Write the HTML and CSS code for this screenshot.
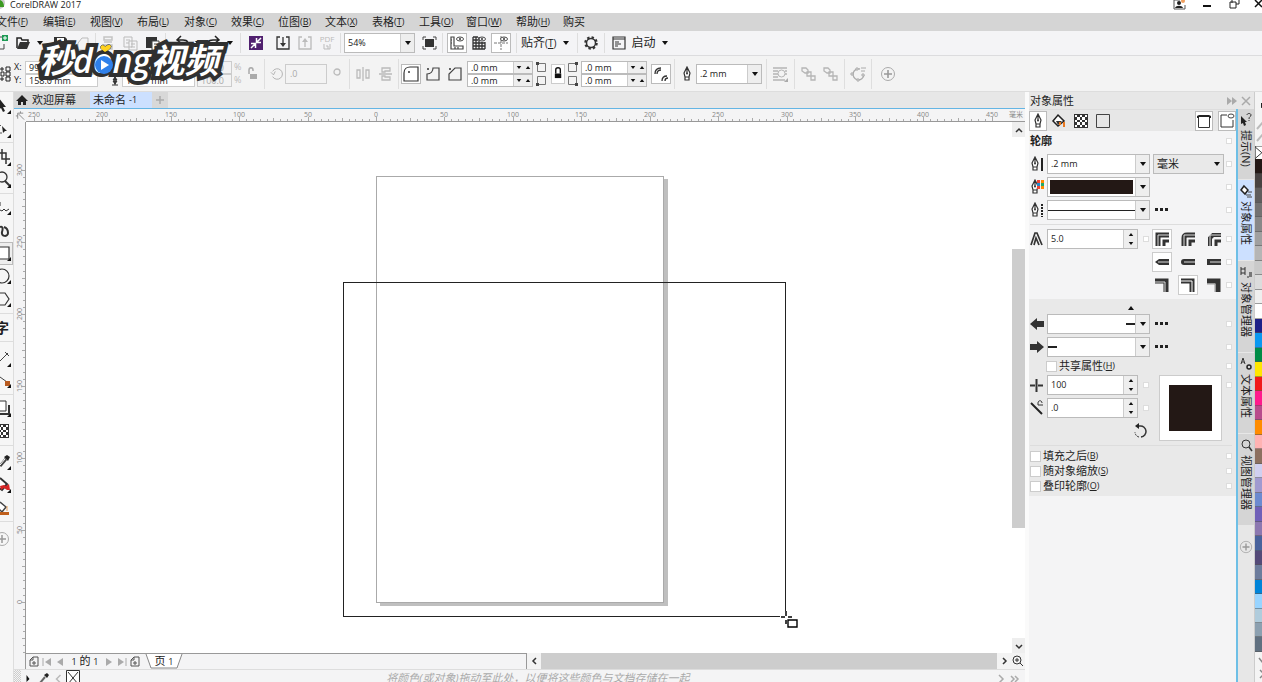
FILE: index.html
```html
<!DOCTYPE html>
<html lang="zh-CN">
<head>
<meta charset="utf-8">
<title>CorelDRAW 2017</title>
<link rel="stylesheet" href="styles.css">
</head>
<body>
<svg class="sprite" aria-hidden="true">
  <symbol id="caret" viewBox="0 0 8 6"><path d="M1 1h6L4 5z" fill="#111"/></symbol>
  <symbol id="up" viewBox="0 0 8 6"><path d="M1 5h6L4 1z" fill="#111"/></symbol>
  <symbol id="pen" viewBox="0 0 10 16"><path d="M5 1 2 7l1 4h4l1-4zM5 1v6M3 11h4v3H3z" fill="#fff" stroke="#333" stroke-width="1.2"/><circle cx="5" cy="7.500" r="1" fill="#333"/></symbol>
  <symbol id="dots" viewBox="0 0 16 6"><path d="M1 1h3v3H1zM6 1h3v3H6zM11 1h3v3h-3z" fill="#222"/></symbol>
  <symbol id="plus" viewBox="0 0 16 16"><circle cx="8" cy="8" r="6.500" fill="none" stroke="#aaa"/><path d="M8 4v8M4 8h8" stroke="#999" stroke-width="1.600"/></symbol>
  <symbol id="sheet" viewBox="0 0 10 12"><path d="M4 1h5v9H1V4zM4 1v3H1M5 5v4M3 7h4" fill="none" stroke="#555"/></symbol>
  <symbol id="chain" viewBox="0 0 16 16"><path d="M1 2h4l2 2v3H4L1 5zM6 6h4v4H6zM10 10h4v4h-4z" fill="#f3f3f3" stroke="#b5b5b5" stroke-width="1.300"/></symbol>
  <symbol id="checks" viewBox="0 0 14 14"><path d="M0 0h14v14H0z" fill="#333"/><path d="M1 1h2v2H1zM6 1h2v2H6zM11 1h2v2h-2zM3 3h3v3H3zM8 3h3v3H8zM1 6h2v2H1zM6 6h2v2H6zM11 6h2v2h-2zM3 8h3v3H3zM8 8h3v3H8zM1 11h2v2H1zM6 11h2v2H6zM11 11h2v2h-2z" fill="#fff"/></symbol>
</svg>

<header class="titlebar">
  <svg class="logo" viewBox="0 0 8 12"><circle cx="-1" cy="3" r="6" fill="#ccc"/><path d="M0 0c3 1 4 4 4 7H0z" fill="#3c9b22"/></svg>
  <span class="app-name">CorelDRAW 2017</span>
  <div class="window-buttons">
    <button aria-label="登录"><svg viewBox="0 0 14 12"><path d="M7 0H1v9h11V5" fill="none" stroke="#555"/><circle cx="6" cy="3" r="2" fill="#222"/><path d="M2 8c1-3 7-3 8 0z" fill="#222"/><circle cx="10" cy="1" r="2" fill="#f0a060"/></svg></button>
    <button aria-label="最小化"><svg viewBox="0 0 14 12"><path d="M3 6h8" stroke="#111" stroke-width="2"/></svg></button>
    <button aria-label="还原"><svg viewBox="0 0 14 12"><path d="M5 3V-1h7v5h-3M3 2h6v6H3z" fill="#fff" stroke="#222"/></svg></button>
    <button aria-label="关闭"><svg viewBox="0 0 14 12"><path d="m7 0 7 7m0-7L7 7" stroke="#111" stroke-width="1.500"/></svg></button>
  </div>
</header>

<nav class="menubar">
  <button>文件<small>(<u>F</u>)</small></button><button>编辑<small>(<u>E</u>)</small></button><button>视图<small>(<u>V</u>)</small></button><button>布局<small>(<u>L</u>)</small></button><button>对象<small>(<u>C</u>)</small></button><button>效果<small>(<u>C</u>)</small></button><button>位图<small>(<u>B</u>)</small></button><button>文本<small>(<u>X</u>)</small></button><button>表格<small>(<u>T</u>)</small></button><button>工具<small>(<u>O</u>)</small></button><button class="wide">窗口<small>(<u>W</u>)</small></button><button>帮助<small>(<u>H</u>)</small></button><button>购买</button>
</nav>

<div class="toolbar">
  <div class="group first">
    <button class="narrow" aria-label="新建"><svg viewBox="0 0 12 20"><path d="M0 16h4v-5M0 4h2" fill="none" stroke="#444"/><path d="M2 2h6v6H2z" fill="#1d9a55"/><path d="M5 3v4M3 5h4" stroke="#fff"/></svg></button>
    <button aria-label="打开"><svg viewBox="0 0 20 20"><path d="M3 15V5h4l1 2h6v2" fill="none" stroke="#222" stroke-width="1.500"/><path d="M3 16 6 9h10l-3 7z" fill="#333"/></svg></button>
    <button class="drop" aria-label="最近打开"><svg viewBox="0 0 8 6"><use href="#caret"/></svg></button>
    <button class="spaced" aria-label="保存"><svg viewBox="0 0 20 20"><path d="M4 4h11l2 2v10H4z" fill="#333"/><path d="M7 5h7v3H7z" fill="#fff"/></svg></button>
    <button aria-label="云"><svg viewBox="0 0 20 20"><path d="m6 10 4-5h6v12H6z" fill="none" stroke="#bbb"/></svg></button>
  </div>
  <div class="group edit">
    <button aria-label="剪切"><svg viewBox="0 0 20 20"><path d="M6 4h8v3H6zM6 9h8M6 12h8v4H6z" fill="none" stroke="#c3c3c3" stroke-width="1.500"/></svg></button>
    <button aria-label="复制"><svg viewBox="0 0 20 20"><path d="M4 4h8v10H4zM9 8h8v9H9zM6 7h4M6 10h3M11 11h4M11 14h4" fill="none" stroke="#bbb"/></svg></button>
    <button aria-label="粘贴"><svg viewBox="0 0 20 20"><path d="M4 4h11v11H4z" fill="#333"/><path d="M10 8h7v9h-7z" fill="#fff" stroke="#444"/><path d="M12 11h4M12 14h4" stroke="#444"/></svg></button>
  </div>
  <div class="group undo">
    <button aria-label="撤销"><svg viewBox="0 0 20 20"><path d="M6 7h5c5 0 6 3 4 7M9 3 5 7l4 3" fill="none" stroke="#222" stroke-width="1.500"/></svg></button>
    <button class="drop" aria-label="撤销列表"><svg viewBox="0 0 8 6"><use href="#caret"/></svg></button>
    <button aria-label="重做"><svg viewBox="0 0 20 20"><path d="M14 7H9c-5 0-6 3-4 7M11 3l4 4-4 3" fill="none" stroke="#222" stroke-width="1.500"/></svg></button>
    <button class="drop" aria-label="重做列表"><svg viewBox="0 0 8 6"><use href="#caret"/></svg></button>
  </div>
  <div class="group plain search">
    <button aria-label="搜索内容"><svg viewBox="0 0 20 20"><path d="M3 3h14v14H3z" fill="#50206f"/><path d="m5 15 4-4m2-2 4-4M5 10.500h4.500V15M10.500 5v4.500H15" fill="none" stroke="#fff" stroke-width="1.500"/></svg></button>
  </div>
  <div class="group files">
    <button aria-label="导入"><svg viewBox="0 0 20 20"><path d="M7 4H4v12h12V4h-3M10 4v8" fill="none" stroke="#333" stroke-width="1.300"/><path d="M7 10h6l-3 4z" fill="#333"/></svg></button>
    <button aria-label="导出"><svg viewBox="0 0 20 20"><path d="M7 4H4v12h12V4h-3M10 14V7" fill="none" stroke="#bbb" stroke-width="1.300"/><path d="M7 9h6l-3-4z" fill="#bbb"/></svg></button>
    <button class="pdf" aria-label="发布为 PDF"><span>PDF</span><svg viewBox="0 0 14 8"><path d="M4 1v5h6V1M6 3h2v3" fill="none" stroke="#bbb"/></svg></button>
  </div>
  <div class="group zoom-group">
    <div class="combo zoom-level"><input type="text" value="54%" aria-label="缩放级别"><button aria-label="选择缩放"><svg viewBox="0 0 8 6"><use href="#caret"/></svg></button></div>
    <button aria-label="全屏预览"><svg viewBox="0 0 20 20"><path d="M6 6h9v8H6z" fill="#333"/><path d="M4 7V4h3M14 4h3v3M4 13v3h3M14 16h3v-3" fill="none" stroke="#444"/></svg></button>
  </div>
  <div class="group view">
    <button class="on" aria-label="标尺"><svg viewBox="0 0 20 20"><path d="M4 4h3v9h9v3H4zM4 7h1M4 10h1M8 14v2M11 14v2" fill="none" stroke="#444" stroke-width="1.200"/><ellipse cx="13" cy="6" rx="3.500" ry="2" fill="none" stroke="#444"/><circle cx="13" cy="6" r="1" fill="#333"/></svg></button>
    <button aria-label="网格"><svg viewBox="0 0 20 20"><path d="M4 4v12h12M7 4v12M10 4v12M13 9v7M16 9v7M4 4h5M4 7h5M4 10h12M4 13h12" fill="none" stroke="#333" stroke-width="1.300"/><ellipse cx="13" cy="6" rx="3.500" ry="2" fill="none" stroke="#444"/><circle cx="13" cy="6" r="1" fill="#333"/></svg></button>
    <button class="on" aria-label="辅助线"><svg viewBox="0 0 20 20"><path d="M10 3v14M3 10h14" stroke="#777" stroke-dasharray="3 1"/><ellipse cx="13" cy="6" rx="3.500" ry="2" fill="#fff" stroke="#444"/><circle cx="13" cy="6" r="1" fill="#333"/></svg></button>
  </div>
  <div class="group snap">
    <button class="text">贴齐<small>(<u>T</u>)</small></button>
    <button class="drop spaced-drop" aria-label="贴齐选项"><svg viewBox="0 0 8 6"><use href="#caret"/></svg></button>
  </div>
  <div class="group">
    <button aria-label="选项"><svg viewBox="0 0 20 20"><circle cx="10" cy="10" r="5.500" fill="none" stroke="#333" stroke-width="2.500" stroke-dasharray="2.300 2"/><circle cx="10" cy="10" r="4.500" fill="none" stroke="#333" stroke-width="1.500"/></svg></button>
  </div>
  <div class="group plain launch">
    <button class="text"><svg viewBox="0 0 20 20"><path d="M4 4h12v12H4zM4 6h12" fill="none" stroke="#333" stroke-width="1.200"/><path d="M6 9h4M6 11h6M6 13h3" stroke="#333"/></svg>启动</button>
    <button class="drop spaced-drop" aria-label="启动列表"><svg viewBox="0 0 8 6"><use href="#caret"/></svg></button>
  </div>
</div>

<div class="propbar">
  <div class="group position">
    <svg class="origin" viewBox="0 0 10 20"><path d="M0 4h2v2H0zM5 3h4v4H5zM0 8h3v4H0zM5 8h4v4H5zM0 14h2v2H0zM5 13h4v4H5z" fill="none" stroke="#222"/></svg>
    <div class="pair labels"><label for="px">X:</label><label for="py">Y:</label></div>
    <div class="pair xy"><input type="text" id="px" value="99.0 mm"><input type="text" id="py" value="158.0 mm"></div>
    <svg class="size-icon" viewBox="0 0 10 24"><path d="M0 6h9M5 14v9M2 14h6M2 23h6M5 15l-2 3h4zM5 22l-2-3h4z" fill="#333" stroke="#333"/></svg>
    <div class="pair xy"><input type="text" aria-label="宽度" value="150.0 mm"><input type="text" aria-label="高度" value="124.0 mm"></div>
    <div class="pair scale"><input type="text" aria-label="水平缩放" value="100.0" disabled><input type="text" aria-label="垂直缩放" value="100.0" disabled></div>
    <div class="pair percent"><span>%</span><span>%</span></div>
    <button class="lock" aria-label="锁定比率"><svg viewBox="0 0 12 16"><path d="M2 8V4c0-3 4-3 4 0v1" fill="none" stroke="#aaa" stroke-width="1.500"/><path d="M3 8h7v5H3z" fill="#aaa"/></svg></button>
  </div>
  <div class="group rotate">
    <svg class="ico" viewBox="0 0 16 16"><path d="M3 11A6 6 0 1 0 3 5M1 6l3 3 2-4" fill="none" stroke="#aaa"/></svg>
    <input class="angle" type="text" aria-label="旋转角度" value=".0" disabled>
    <svg class="degree" viewBox="0 0 12 14"><circle cx="5" cy="5" r="3" fill="none" stroke="#bbb" stroke-width="1.300"/></svg>
  </div>
  <div class="group mirror">
    <button aria-label="水平镜像"><svg viewBox="0 0 20 20"><path d="M4 6h3v8H4zM16 6h-3v8h3zM10 3v14" fill="none" stroke="#bbb" stroke-width="1.300"/></svg></button>
    <button aria-label="垂直镜像"><svg viewBox="0 0 20 20"><path d="M7 4h8v3h-5v1H7zM7 16h8v-3h-5v-1H7zM4 10h13" fill="none" stroke="#bbb" stroke-width="1.300"/></svg></button>
  </div>
  <div class="group corners">
    <button class="on" aria-label="圆角"><svg viewBox="0 0 20 20"><path d="M3 17V9c0-4 3-6 6-6h8v14z" fill="none" stroke="#333" stroke-width="1.200"/><circle cx="8" cy="8" r="1" fill="#333"/></svg></button>
    <button aria-label="扇形角"><svg viewBox="0 0 20 20"><path d="M4 16V10c4 0 6-3 6-6h6v12z" fill="none" stroke="#444" stroke-width="1.200"/><circle cx="5" cy="5" r="1" fill="#333"/></svg></button>
    <button aria-label="倒棱角"><svg viewBox="0 0 20 20"><path d="M4 16V10l6-6h6v12z" fill="none" stroke="#444" stroke-width="1.200"/><circle cx="5" cy="5" r="1" fill="#333"/></svg></button>
    <div class="pair radius"><div class="spin"><input type="text" aria-label="左上角半径" value=".0 mm"><button aria-label="减小"><svg viewBox="0 0 8 6"><use href="#caret"/></svg></button><button aria-label="增大"><svg viewBox="0 0 8 6"><use href="#up"/></svg></button></div><div class="spin"><input type="text" aria-label="左下角半径" value=".0 mm"><button aria-label="减小"><svg viewBox="0 0 8 6"><use href="#caret"/></svg></button><button aria-label="增大"><svg viewBox="0 0 8 6"><use href="#up"/></svg></button></div></div>
    <svg class="corner-marks" viewBox="0 0 12 26"><path d="M2.500 2.500h8v8h-8zM2.500 15.500h8v8h-8z" fill="none" stroke="#777"/><path d="M1 1h3v3H1zM1 22h3v3H1z" fill="#444"/></svg>
    <button class="corner-lock" aria-label="同时编辑所有角"><svg viewBox="0 0 12 16"><path d="M3 8V4c0-3 5-3 5 0v4" fill="none" stroke="#111" stroke-width="1.500"/><path d="M2 8h7v5H2z" fill="#111"/></svg></button>
    <svg class="corner-marks" viewBox="0 0 12 26"><path d="M1.500 2.500h8v8h-8zM1.500 15.500h8v8h-8z" fill="none" stroke="#777"/><path d="M8 1h3v3H8zM8 22h3v3H8z" fill="#444"/></svg>
    <div class="pair radius"><div class="spin"><input type="text" aria-label="右上角半径" value=".0 mm"><button aria-label="减小"><svg viewBox="0 0 8 6"><use href="#caret"/></svg></button><button aria-label="增大"><svg viewBox="0 0 8 6"><use href="#up"/></svg></button></div><div class="spin"><input type="text" aria-label="右下角半径" value=".0 mm"><button aria-label="减小"><svg viewBox="0 0 8 6"><use href="#caret"/></svg></button><button aria-label="增大"><svg viewBox="0 0 8 6"><use href="#up"/></svg></button></div></div>
    <button class="on relative" aria-label="相对角缩放"><svg viewBox="0 0 20 20"><path d="M4 10c0-4 2-6 6-6M6 10c0-2 1-4 4-4M11 17c0-3 2-5 5-5M14 17c0-2 1-3 3-3" fill="none" stroke="#333" stroke-width="1.300"/></svg></button>
  </div>
  <div class="group outline">
    <svg class="ico" viewBox="0 0 10 16"><use href="#pen"/></svg>
    <div class="combo width"><input type="text" aria-label="轮廓宽度" value=".2 mm"><button aria-label="选择轮廓宽度"><svg viewBox="0 0 8 6"><use href="#caret"/></svg></button></div>
  </div>
  <div class="group wrap"><button aria-label="文本换行"><svg viewBox="0 0 20 20"><path d="M3 4h14M3 7h5M15 7h2M3 10h5M15 10h2M3 13h5M3 16h12" stroke="#b5b5b5" stroke-width="1.500"/><circle cx="11.500" cy="9.500" r="3.500" fill="none" stroke="#b5b5b5"/><path d="M18 14v4h-4z" fill="#aaa"/></svg></button></div>
  <div class="group order"><button aria-label="到图层前面"><svg viewBox="0 0 16 16"><use href="#chain"/></svg></button><button aria-label="到图层后面"><svg viewBox="0 0 16 16"><use href="#chain"/></svg></button></div>
  <div class="group"><button aria-label="转换为曲线"><svg viewBox="0 0 20 20"><path d="M12 5a5.500 5.500 0 1 0 4 6" fill="none" stroke="#aaa" stroke-width="1.300"/><path d="M13 4h5M13 7h4" stroke="#aaa"/><path d="M8 4h2v2H8zM3 9h2v2H3zM9 15h2v2H9zM14 10h2v2h-2z" fill="#f3f3f3" stroke="#aaa"/></svg></button></div>
  <div class="group plain add"><button aria-label="快速自定义"><svg viewBox="0 0 16 16"><use href="#plus"/></svg></button></div>
</div>

<main class="workspace">
  <aside class="toolbox">
    <div><button aria-label="选择"><svg viewBox="0 0 13 23"><path d="M-2 3 6 13H3l2 4-2 1-2-4-3 2z" fill="#222"/><path d="M11 16v4H7z" fill="#111"/></svg></button><button aria-label="形状"><svg viewBox="0 0 13 23"><path d="M2 9l5 5H5l-2 2z" fill="#222"/><path d="M-1 7l2 2M0 16h2" stroke="#555"/><path d="M11 17v4H7z" fill="#111"/></svg></button></div>
    <div><button aria-label="裁剪"><svg viewBox="0 0 13 23"><path d="M0 8h6v11M2 4v10h8" fill="none" stroke="#333" stroke-width="1.500"/><path d="M11 17v4H7z" fill="#111"/></svg></button><button aria-label="缩放"><svg viewBox="0 0 13 23"><circle cx="2" cy="9" r="5" fill="none" stroke="#333" stroke-width="1.300"/><path d="m5 13 5 5" stroke="#333" stroke-width="2"/><path d="M11 16v4H7z" fill="#111"/></svg></button></div>
    <div><button aria-label="手绘"><svg viewBox="0 0 13 23"><path d="M0 6v4M0 14l2 1 2-2 2 2 3-2" fill="none" stroke="#333"/><path d="M11 15v4H7z" fill="#111"/></svg></button><button aria-label="艺术笔"><svg viewBox="0 0 13 23"><path d="M0 8c3-1 3 2 2 5-1 5 6 5 6 1 0-3-1-5-4-6" fill="none" stroke="#333" stroke-width="2"/></svg></button><button class="on" aria-label="矩形"><svg viewBox="0 0 13 23"><path d="M0 5h9v12H0" fill="#fff" stroke="#333" stroke-width="1.200"/><path d="M11 15v4H7z" fill="#111"/></svg></button><button aria-label="椭圆形"><svg viewBox="0 0 13 23"><circle cx="2" cy="11" r="7" fill="none" stroke="#333" stroke-width="1.200"/><path d="M11 15v4H7z" fill="#111"/></svg></button><button aria-label="多边形"><svg viewBox="0 0 13 23"><path d="M0 5h5l4 6-4 6H0" fill="none" stroke="#333" stroke-width="1.200"/><path d="M11 15v4H7z" fill="#111"/></svg></button></div>
    <div><button class="type" aria-label="文本">字</button></div>
    <div class="low"><button aria-label="平行度量"><svg viewBox="0 0 13 23"><path d="m-1 16 9-9M5 6l4 4" stroke="#444"/><path d="M11 17v4H7z" fill="#111"/></svg></button><button aria-label="连接器"><svg viewBox="0 0 13 23"><path d="m0 8 7 5" stroke="#444"/><path d="M5 12h5v5H5z" fill="#b85b20"/><path d="M11 15v4H7z" fill="#111"/></svg></button></div>
    <div><button aria-label="阴影"><svg viewBox="0 0 13 23"><path d="M0 17h9V8" fill="none" stroke="#333" stroke-width="2"/><path d="M0 4h6v10H0" fill="#fff" stroke="#333"/><path d="M11 16v4H7z" fill="#111"/></svg></button><button aria-label="透明度"><svg viewBox="0 0 13 23"><use href="#checks" x="-5" y="4" width="14" height="14"/></svg></button></div>
    <div class="fills"><button aria-label="颜色滴管"><svg viewBox="0 0 13 23"><path d="m0 16 6-7" stroke="#444" stroke-width="3"/><path d="m0 15 5-6" stroke="#fff"/><path d="m4 7 4 4 2-4-3-2z" fill="#222"/><path d="M11 16v4H7z" fill="#111"/></svg></button><button aria-label="交互式填充"><svg viewBox="0 0 13 23"><path d="m0 5 7 6-5 6-3-2" fill="#fff" stroke="#333" stroke-width="2"/><path d="m0 13 4-1 2 1 3-2 1 6H7l-3-2-3 2z" fill="#d62525"/><path d="M11 16v4H7z" fill="#111"/></svg></button><button aria-label="智能填充"><svg viewBox="0 0 13 23"><path d="m0 6 6 5-4 5-3-3" fill="#fff" stroke="#444" stroke-width="1.500"/><path d="M0 16h9v3H0z" fill="#c0601c"/><path d="M7 10v5" stroke="#e6a15c"/></svg></button></div>
    <div class="end"><button class="more" aria-label="更多工具"><svg viewBox="0 0 13 23"><circle cx="2" cy="11" r="6.500" fill="none" stroke="#aaa"/><path d="M2 7v8M-2 11h8" stroke="#999" stroke-width="1.500"/></svg></button></div>
  </aside>

  <section class="document">
    <div class="doc-tabs">
      <button class="welcome"><svg viewBox="0 0 12 12"><path d="M6 1 0 7h2v4h3V8h2v3h3V7h2z" fill="#222"/></svg>欢迎屏幕</button>
      <button class="current">未命名<small>-1</small></button>
      <button class="new-tab" aria-label="新文档"><svg viewBox="0 0 12 12"><path d="M6 2v8M2 6h8" stroke="#aaa" stroke-width="1.500"/></svg></button>
    </div>
    <div class="ruler-row">
      <svg class="ruler-corner" viewBox="0 0 13 12"><path d="M4 10V4h6M5 5l6 6M7 2v2M2 7h2" fill="none" stroke="#888"/></svg>
      <svg class="ruler-h" id="rulerH" aria-hidden="true"></svg>
    </div>
    <div class="canvas-row">
      <svg class="ruler-v" id="rulerV" aria-hidden="true"></svg>
      <div class="canvas">
        <div class="page"></div>
        <div class="marquee"></div>
        <svg class="cursor" viewBox="0 0 20 20"><path d="M0 6h15M6 0v14" stroke="#fff" stroke-width="2"/><path d="M6 0v5M6 9v4M1 6h4M8 6h4" stroke="#000" stroke-width="1.500"/><path d="M8 9h9v7H8z" fill="#fff" stroke="#000" stroke-width="1.400"/></svg>
      </div>
      <div class="scroll-v">
        <button aria-label="向上滚动"><svg viewBox="0 0 12 12"><path d="m3 8 3-3 3 3" fill="none" stroke="#333" stroke-width="1.500"/></svg></button>
        <div class="track"><div class="thumb"></div></div>
        <button aria-label="向下滚动"><svg viewBox="0 0 12 12"><path d="m3 5 3 3 3-3" fill="none" stroke="#333" stroke-width="1.500"/></svg></button>
      </div>
    </div>
    <div class="page-row">
      <div class="page-nav">
        <button aria-label="在前面添加页"><svg viewBox="0 0 10 12"><use href="#sheet"/></svg></button>
        <button aria-label="第一页"><svg viewBox="0 0 10 12"><path d="M1 2v8" stroke="#aaa"/><path d="M9 2v8L3 6z" fill="#aaa"/></svg></button>
        <button aria-label="上一页"><svg viewBox="0 0 10 12"><path d="M8 2v8L2 6z" fill="#aaa"/></svg></button>
        <span class="count"><small>1</small>&nbsp;的&nbsp;<small>1</small></span>
        <button aria-label="下一页"><svg viewBox="0 0 10 12"><path d="M2 2v8l6-4z" fill="#aaa"/></svg></button>
        <button aria-label="最后一页"><svg viewBox="0 0 10 12"><path d="M9 2v8" stroke="#aaa"/><path d="M1 2v8l6-4z" fill="#aaa"/></svg></button>
        <button aria-label="在后面添加页"><svg viewBox="0 0 10 12"><use href="#sheet"/></svg></button>
        <button class="page-tab"><svg viewBox="0 0 38 15"><path d="M1 0h36l-5 14H6z" fill="#fff"/><path d="M1 0 6 14h26l5-14" fill="none" stroke="#888"/></svg><span>页 <small>1</small></span></button>
      </div>
      <div class="scroll-h">
        <button aria-label="向左滚动"><svg viewBox="0 0 12 12"><path d="M8 3 5 6l3 3" fill="none" stroke="#333" stroke-width="1.500"/></svg></button>
        <div class="thumb"></div>
        <button aria-label="向右滚动"><svg viewBox="0 0 12 12"><path d="m5 3 3 3-3 3" fill="none" stroke="#333" stroke-width="1.500"/></svg></button>
        <button aria-label="导航器"><svg viewBox="0 0 12 12"><circle cx="5" cy="5" r="4" fill="none" stroke="#333"/><path d="m8 8 3 3M5 3v4M3 5h4" stroke="#333"/></svg></button>
      </div>
    </div>
    <div class="doc-palette">
      <span class="grip"></span>
      <svg class="ico" viewBox="0 0 10 14"><path d="M4 5v7l3-3z" fill="#111"/></svg>
      <svg class="ico eyedrop" viewBox="0 0 14 14"><path d="m4 13 5-6" stroke="#666" stroke-width="2"/><path d="m8 5 3 3 2-3-2-2z" fill="#222"/></svg>
      <svg class="ico" viewBox="0 0 10 14"><path d="M7 5 3 9l4 4" fill="none" stroke="#bbb" stroke-width="1.500"/></svg>
      <svg class="ico none" viewBox="0 0 14 14"><path d="M0.500 0.500h13V14H0.500z" fill="#fff" stroke="#333"/><path d="m2 2 10 12M12 2 2 14" stroke="#333"/></svg>
      <p>将颜色(或对象)拖动至此处，以便将这些颜色与文档存储在一起</p>
      <svg class="ico next" viewBox="0 0 24 14"><path d="m1 5 4 4-4 4M13 6l3 3-3 3M17 6l3 3-3 3" fill="none" stroke="#aaa" stroke-width="1.500"/></svg>
    </div>
  </section>

  <section class="side">
    <header class="docker-title"><h2>对象属性</h2>
      <button aria-label="折叠"><svg viewBox="0 0 12 12"><path d="M1 2v8l5-4zM6 2v8l5-4z" fill="#aaa"/></svg></button>
      <button aria-label="关闭泊坞窗"><svg viewBox="0 0 12 12"><path d="m2 2 8 8m0-8-8 8" stroke="#aaa" stroke-width="1.500"/></svg></button>
    </header>
    <div class="side-body">
      <div class="docker">
        <div class="kinds">
          <button class="on" aria-label="轮廓"><svg viewBox="0 0 10 16"><use href="#pen"/></svg></button>
          <button aria-label="填充"><svg viewBox="0 0 16 16"><path d="m7 2 6 6-6 5-5-5z" fill="#fff" stroke="#222" stroke-width="1.500"/><path d="M5 8h6l-4 4z" fill="#333"/><path d="M13 9v5M9 9v3" stroke="#e87820" stroke-width="2"/></svg></button>
          <button aria-label="透明度"><svg viewBox="-1 -1 16 16"><use href="#checks" width="14" height="14"/></svg></button>
          <button aria-label="矩形"><svg viewBox="0 0 16 16"><path d="M1.500 1.500h13v13h-13z" fill="none" stroke="#444"/></svg></button>
          <button class="on frame-button" aria-label="滚动模式"><svg viewBox="0 0 16 16"><path d="M2.500 5v9.500h11V5" fill="none" stroke="#333"/><path d="M1 5V3l2-1h10l2 1v2h-2V4H3v1z" fill="#222"/></svg></button>
          <button class="on" aria-label="显示选项"><svg viewBox="0 0 16 16"><path d="M8 2H2v12h12V7" fill="none" stroke="#333"/><ellipse cx="12" cy="3" rx="3" ry="2" fill="none" stroke="#444"/></svg></button>
        </div>

        <div class="panel">
          <div class="row"><h3>轮廓</h3><i class="flag"></i></div>
          <div class="row"><svg class="lead" viewBox="0 0 17 18"><use href="#pen" x="0" y="1" width="10" height="16"/><path d="M12 3v13" stroke="#222" stroke-width="2"/></svg>
            <div class="combo field"><input type="text" aria-label="宽度" value=".2 mm"><button aria-label="选择宽度"><svg viewBox="0 0 8 6"><use href="#caret"/></svg></button></div>
            <div class="select"><select aria-label="单位"><option>毫米</option></select><svg viewBox="0 0 8 6"><use href="#caret"/></svg></div><i class="flag"></i></div>
          <div class="row"><svg class="lead" viewBox="0 0 17 18"><use href="#pen" x="0" y="1" width="10" height="16"/><path d="M7 2h3v3H7zM7 8h3v3H7z" fill="#e43"/><path d="M11 2h3v3h-3zM11 8h3v3h-3z" fill="#f80"/><path d="M7 5h3v3H7z" fill="#28c"/><path d="M11 5h3v3h-3z" fill="#2a6"/></svg>
            <div class="combo field"><button class="sample" aria-label="轮廓颜色"><span class="ink"></span></button><button aria-label="选择颜色"><svg viewBox="0 0 8 6"><use href="#caret"/></svg></button></div><i class="flag"></i></div>
          <div class="row"><svg class="lead" viewBox="0 0 17 18"><use href="#pen" x="0" y="1" width="10" height="16"/><path d="M12 3v13" stroke="#222" stroke-width="2" stroke-dasharray="2 1"/></svg>
            <div class="combo field"><button class="sample" aria-label="线条样式"><span class="stroke"></span></button><button aria-label="选择样式"><svg viewBox="0 0 8 6"><use href="#caret"/></svg></button></div>
            <button class="more" aria-label="设置"><svg viewBox="0 0 16 6"><use href="#dots"/></svg></button><i class="flag"></i></div>
          <hr>
          <div class="row"><svg class="lead" viewBox="0 0 17 18"><path d="M1 15 5 3h2l5 12M4 15 6 8l3 7" fill="none" stroke="#333" stroke-width="1.700"/></svg>
            <div class="stepper"><input type="text" aria-label="斜接限制" value="5.0"><div><button aria-label="增大"><svg viewBox="0 0 8 6"><use href="#up"/></svg></button><button aria-label="减小"><svg viewBox="0 0 8 6"><use href="#caret"/></svg></button></div></div><i class="flag near"></i>
            <div class="trio"><button class="on" aria-label="斜接角"><svg viewBox="0 0 18 18"><path d="M5 16V5h11" fill="none" stroke="#333" stroke-width="5"/><path d="M5 16V5h11" fill="none" stroke="#ddd"/><path d="M11 16v-5h5" fill="none" stroke="#333" stroke-width="3"/></svg></button><button aria-label="圆角"><svg viewBox="0 0 18 18"><path d="M5 16V8q0-3 3-3h8" fill="none" stroke="#333" stroke-width="5"/><path d="M5 16V5h11" fill="none" stroke="#ddd"/><path d="M11 16v-5h5" fill="none" stroke="#333" stroke-width="3"/></svg></button><button aria-label="斜切角"><svg viewBox="0 0 18 18"><path d="M5 16V8l3-3h8" fill="none" stroke="#333" stroke-width="4"/><path d="M5 16V5h11" fill="none" stroke="#ddd"/><path d="M11 16v-5h5" fill="none" stroke="#333" stroke-width="3"/></svg></button></div><i class="flag"></i></div>
          <div class="row"><div class="trio pushed"><button class="on" aria-label="方形端头"><svg viewBox="0 0 18 18"><path d="m2 9 4-3h10v6H6z" fill="#333"/><path d="M5 9h11" stroke="#ddd"/></svg></button><button aria-label="圆形端头"><svg viewBox="0 0 18 18"><path d="M5 6h11v6H5Q2 12 2 9t3-3" fill="#333"/><path d="M5 9h11" stroke="#ddd"/></svg></button><button aria-label="延伸端头"><svg viewBox="0 0 18 18"><path d="M2 6h14v6H2z" fill="#333"/><path d="M5 9h11" stroke="#ddd"/></svg></button></div><i class="flag"></i></div>
          <div class="row"><div class="trio pushed"><button aria-label="外部轮廓"><svg viewBox="0 0 18 18"><path d="M2 5h11v11" fill="none" stroke="#333" stroke-width="5"/><path d="M2 6h10v10" fill="none" stroke="#ddd"/></svg></button><button class="on" aria-label="居中轮廓"><svg viewBox="0 0 18 18"><path d="M2 5h11v11" fill="none" stroke="#333" stroke-width="5"/><path d="M2 5h11v11" fill="none" stroke="#fff"/></svg></button><button aria-label="内部轮廓"><svg viewBox="0 0 18 18"><path d="M2 5h11v11" fill="none" stroke="#333" stroke-width="5"/><path d="M2 8h8v8" fill="none" stroke="#999"/></svg></button></div><i class="flag"></i></div>
        </div>

        <div class="panel shaded">
          <button class="fold" aria-label="收起"><svg viewBox="0 0 8 6"><use href="#up"/></svg></button>
          <div class="row"><svg class="lead" viewBox="0 0 17 18"><path d="m0 9 7-6v3h7v6H7v3z" fill="#333"/></svg>
            <div class="combo field"><button class="sample" aria-label="起始箭头"><span class="dash right"></span></button><button aria-label="选择起始箭头"><svg viewBox="0 0 8 6"><use href="#caret"/></svg></button></div>
            <button class="more" aria-label="起始箭头选项"><svg viewBox="0 0 16 6"><use href="#dots"/></svg></button><i class="flag"></i></div>
          <div class="row"><svg class="lead" viewBox="0 0 17 18"><path d="M14 9 7 3v3H0v6h7v3z" fill="#333"/></svg>
            <div class="combo field"><button class="sample" aria-label="终止箭头"><span class="dash"></span></button><button aria-label="选择终止箭头"><svg viewBox="0 0 8 6"><use href="#caret"/></svg></button></div>
            <button class="more" aria-label="终止箭头选项"><svg viewBox="0 0 16 6"><use href="#dots"/></svg></button><i class="flag"></i></div>
          <div class="row check indent"><label><input type="checkbox">共享属性<small>(<u>H</u>)</small></label><i class="flag"></i></div>
          <div class="nib">
            <div class="nib-fields">
              <div class="row"><svg class="lead" viewBox="0 0 17 18"><path d="M6.500 3v13M0 9.500h5M8 9.500h5" stroke="#333" stroke-width="2"/></svg><div class="stepper"><input type="text" aria-label="伸展" value="100"><div><button aria-label="增大"><svg viewBox="0 0 8 6"><use href="#up"/></svg></button><button aria-label="减小"><svg viewBox="0 0 8 6"><use href="#caret"/></svg></button></div></div><i class="flag near"></i></div>
              <div class="row"><svg class="lead" viewBox="0 0 17 18"><path d="m1 4 11 11" stroke="#222" stroke-width="2"/><path d="M8 6V4c0-3 4-3 4 0M8 6h5" fill="none" stroke="#333"/></svg><div class="stepper"><input type="text" aria-label="笔尖角度" value=".0"><div><button aria-label="增大"><svg viewBox="0 0 8 6"><use href="#up"/></svg></button><button aria-label="减小"><svg viewBox="0 0 8 6"><use href="#caret"/></svg></button></div></div><i class="flag near"></i></div>
              <button class="reset" aria-label="默认"><svg viewBox="0 0 16 16"><path d="M5 3h3a5 5 0 0 1 1 11" fill="none" stroke="#333" stroke-width="1.500"/><path d="M7 14a5 5 0 0 1-4-5" fill="none" stroke="#333" stroke-dasharray="2 1"/><path d="M7 0v6L3 3z" fill="#222"/></svg></button>
            </div>
            <div class="preview"><span></span></div>
            <i class="flag"></i>
          </div>
          <hr>
          <div class="row check"><label><input type="checkbox">填充之后<small>(<u>B</u>)</small></label><i class="flag"></i></div>
          <div class="row check"><label><input type="checkbox">随对象缩放<small>(<u>S</u>)</small></label><i class="flag"></i></div>
          <div class="row check"><label><input type="checkbox">叠印轮廓<small>(<u>O</u>)</small></label><i class="flag"></i></div>
        </div>
      </div>
      <nav class="docker-tabs">
        <button class="hints"><svg viewBox="0 0 14 14"><path d="m2 3 6 6H6l1 3-2 1-1-3-2 1z" fill="#222"/><path d="M8 2c0-2 4-2 4 0 0 2-2 1-2 4M10 7v1" fill="none" stroke="#333"/></svg>提示(N)</button>
        <button class="current"><svg viewBox="0 0 14 14"><path d="m5 2 4 4-3 4-4-4z" fill="#fff" stroke="#222" stroke-width="1.500"/><path d="M7 11h5M9 8h4M8 13h5" stroke="#444"/></svg>对象属性</button>
        <button class="manager"><svg viewBox="0 0 14 14"><path d="M2 2v8M6 2v8M2 4h4M2 8h4M8 12h2" stroke="#333"/><path d="M10 7h3v5h-3z" fill="#777"/></svg>对象管理器</button>
        <button><svg viewBox="0 0 14 14"><path d="m2 7 2-6 2 6M3 5h2" fill="none" stroke="#333"/><circle cx="10" cy="10" r="2" fill="none" stroke="#222" stroke-width="1.500"/></svg>文本属性</button>
        <button class="viewer"><svg viewBox="0 0 14 14"><circle cx="7" cy="6" r="4" fill="none" stroke="#333"/><path d="m10 9 3 4" stroke="#333" stroke-width="1.500"/></svg>视图管理器</button>
        <button class="add" aria-label="快速自定义"><svg viewBox="0 0 16 16"><use href="#plus"/></svg></button>
      </nav>
    </div>
  </section>

  <aside class="palette">
    <svg class="palette-head" viewBox="0 0 8 54"><path d="M6 11v5l3-1v-4z" fill="#222"/><path d="m2 37 6-7M2 49l6-7" stroke="#bbb" stroke-width="2"/></svg>
    <div class="swatches" id="swatches"><svg class="swatch-none" viewBox="0 0 8 14"><path d="M0 0h8v14H0z" fill="#fff" stroke="#333"/><path d="m0 1 7 6-7 6" fill="none" stroke="#333"/></svg></div>
    <svg class="palette-foot" viewBox="0 0 8 30"><path d="m4 6 4 5M5 18l4 4-4 4" fill="none" stroke="#888" stroke-width="1.500"/></svg>
  </aside>
</main>

<div class="watermark">秒d<span class="play">o<svg viewBox="0 0 24 32"><path d="M13 9C9 6 8 5 9 3c2-2 4 0 4 1 1-2 5-3 6-1 0 2-2 4-6 6z" fill="#ffd21f" stroke="#222"/><circle cx="12" cy="22" r="9" fill="#2f80ea"/><path d="m9 17 8 5-8 5z" fill="#fff"/></svg></span>ng视频</div>
<script src="script.js"></script>
</body>
</html>
```

FILE: styles.css
```css
* { box-sizing: border-box; }
body {
  margin: 0;
  height: 100vh;
  overflow: hidden;
  position: relative;
  display: flex;
  flex-direction: column;
  background: #f4f4f5;
  color: #222;
  font-family: "Open Sans", "Noto Sans CJK SC", sans-serif;
  font-size: 11px;
  line-height: 14px;
}
button, input, select { font: inherit; color: inherit; margin: 0; padding: 0; border: 0; background: none; border-radius: 0; min-width: 0; }
button { display: flex; align-items: center; justify-content: center; flex: none; white-space: nowrap; }
svg { display: block; flex: none; }
small { font-size: 9px; }
h2, h3, p { margin: 0; font-size: 11px; }
.sprite { position: absolute; width: 0; height: 0; }

/* Title and menu */
.titlebar { flex: 0 0 13px; display: flex; background: #fff; }
.logo { width: 8px; height: 12px; }
.app-name { margin-left: 2px; font-size: 9px; line-height: 10px; }
.window-buttons { margin-left: auto; display: flex; gap: 13px; height: 12px; }
.window-buttons svg { width: 14px; height: 12px; }
.window-buttons button:last-child { margin-left: -6px; }
.menubar { flex: 0 0 18px; display: flex; margin-left: -4px; background: #d5d5d5; }
.menubar button { width: 47px; justify-content: flex-start; }
.menubar .wide { width: 50px; }

/* Toolbars */
.toolbar { flex: 0 0 25px; display: flex; align-items: center; background: #f4f4f6; border-bottom: 1px solid #dcdcde; }
.propbar { flex: 0 0 36px; display: flex; align-items: center; background: #f3f3f3; border-bottom: 1px solid #ddd; }
.group { display: flex; align-items: center; gap: 2px; height: 20px; padding: 0 3px; border-right: 1px solid #dedede; }
.propbar .group { height: 30px; }
.group.plain { border-right: 0; }
.group button { width: 20px; height: 20px; }
.group button svg { width: 20px; height: 20px; }
.group .drop { width: 8px; }
.group .drop svg, .combo button svg, .select svg { width: 8px; height: 6px; }
.group .text { width: auto; font-size: 12px; }
.group .text small { font-size: 10px; }
.group .text svg { margin-right: 2px; }
.group .on { background: #fff; border: 1px solid #bbb; }
.on { background: #fff; border: 1px solid #bbb; }
.group.first { padding-left: 0; }
.group .narrow, .group .narrow svg { width: 12px; }
.group .spaced { margin-left: 4px; }
.group .spaced-drop { margin-left: 3px; margin-right: 4px; }
.group.edit { padding-left: 2px; }
.group.undo { padding: 0 6px; }
.group.search { padding: 0 1px 0 5px; }
.group.files { padding-left: 6px; }
.group .pdf { flex-direction: column; color: #bbb; font-size: 8px; line-height: 8px; }
.group .pdf svg { width: 14px; height: 8px; }
.combo { display: flex; height: 20px; background: #fff; border: 1px solid #bbb; }
.combo input { flex: 1; width: 10px; padding-left: 3px; font-size: 9px; }
.combo > button:last-child { width: 14px; height: auto; background: #eee; border-left: 1px solid #ccc; }
.zoom-level { width: 71px; }
.group.zoom-group { gap: 4px; }
.group.view { padding: 0 5px 0 4px; }
.group.snap { padding-left: 4px; }
.group.launch { padding-left: 4px; }
.launch .drop, .snap .drop { margin-left: 4px; }

.pair { display: flex; flex-direction: column; }
.pair > * { height: 13px; line-height: 12px; font-size: 9px; }
.pair input { width: 100%; padding-left: 3px; background: #fff; border: 1px solid #ccc; font-size: 9px; line-height: 11px; }
.labels { width: 9px; }
.xy { width: 73px; }
.scale { width: 35px; }
.pair.scale input, .angle { background: #f3f3f3; border: 1px solid #ccc; color: #aaa; }
.percent { width: 10px; color: #bbb; }
.group.position { gap: 2px; padding: 0 4px 0 0; }
.origin { width: 12px; height: 20px; }
.size-icon { width: 10px; height: 24px; margin-left: 10px; }
.group .lock, .group .lock svg { width: 14px; height: 16px; }
.group.rotate { padding: 0 5px; gap: 1px; }
.ico { width: 14px; height: 16px; }
.angle { width: 42px; height: 20px; padding-left: 4px; font-size: 9px; }
.degree { width: 12px; height: 14px; margin-left: 4px; }
.group.corners { padding-left: 2px; }
.spin { display: flex; width: 66px; background: #eee; border: 1px solid #bbb; }
.pair .spin input { flex: 1; width: 20px; border: 0; border-right: 1px solid #ccc; }
.group .spin button { width: 9px; height: 11px; }
.group .spin button svg { width: 6px; height: 5px; }
.corner-marks { width: 12px; height: 26px; }
.group .corner-lock { width: 14px; margin-left: 2px; border: 1px solid #ccc; background: #fff; }
.group .corner-lock svg { width: 11px; height: 15px; }
.group .relative { margin-left: 2px; }
.group.outline { padding: 0 4px 0 5px; }
.combo.width { width: 66px; }
.group.wrap { padding-right: 4px; }
.group.order { padding-left: 4px; }
.group.order button svg { width: 16px; height: 16px; }
.group.add { padding-left: 6px; }
.group.add svg { width: 16px; height: 16px; }

/* Workspace */
.workspace { flex: 1; min-height: 0; display: flex; }
.toolbox { flex: 0 0 14px; background: #f6f6f6; border-right: 1px solid #ddd; }
.toolbox div { padding: 2px 0; border-bottom: 1px solid #ddd; }
.toolbox .low { padding: 4px 0 2px; }
.toolbox .fills { padding: 4px 0 2px; }
.toolbox .end { border: 0; padding-top: 6px; }
.toolbox button { width: 13px; height: 23px; overflow: hidden; }
.toolbox svg { width: 13px; height: 23px; }
.toolbox .on { background: #eee; border-width: 1px 1px 1px 0; }
.toolbox .type { font-size: 14px; font-weight: 700; justify-content: flex-end; padding-right: 4px; }
.document { flex: 1; min-width: 0; display: flex; flex-direction: column; }

.doc-tabs { flex: 0 0 17px; display: flex; background: #e7e7e7; border-bottom: 1px solid #64b5e4; }
.doc-tabs .welcome { width: 76px; gap: 4px; padding-left: 2px; justify-content: flex-start; background: #d8d8d8; }
.doc-tabs .current { width: 62px; gap: 3px; padding-left: 3px; justify-content: flex-start; background: #cce0ff; }
.doc-tabs .new-tab { width: 16px; background: #d8d8d8; }
.doc-tabs svg { width: 12px; height: 12px; }
.ruler-row { flex: 0 0 13px; display: flex; }
.ruler-corner { width: 12px; height: 12px; }
.ruler-h { flex: 1; width: 100%; min-width: 0; height: 13px; border-bottom: 1px solid #999; }
.ruler-v { width: 12px; height: 100%; border-right: 1px solid #999; }
.ruler-h text, .ruler-v text { font-size: 7px; fill: #888; text-anchor: middle; }
.ruler-h path, .ruler-v path { stroke: #aaa; fill: none; }
.canvas-row { flex: 1; min-height: 0; display: flex; }
.canvas { flex: 1; position: relative; background: #fff; overflow: hidden; }
.page { position: absolute; left: 350px; top: 54px; width: 288px; height: 427px; background: #fff; border: 1px solid #aaa; box-shadow: 4px 3px 0 #bfbfbf; }
.marquee { position: absolute; left: 317px; top: 160px; width: 443px; height: 335px; border: 1px solid #222; }
.cursor { position: absolute; left: 754px; top: 489px; width: 20px; height: 20px; }
.scroll-v { flex: 0 0 13px; display: flex; flex-direction: column; background: #fff; }
.scroll-v button { height: 15px; background: #eee; }
.scroll-v svg, .scroll-h svg { width: 12px; height: 12px; }
.track { flex: 1; display: flex; flex-direction: column; }
.track .thumb { margin-top: 112px; height: 279px; background: #cdcdcd; }

.page-row { flex: 0 0 14px; display: flex; }
.page-nav { flex: 0 0 502px; display: flex; align-items: center; margin-left: 11px; padding-left: 2px; border: 1px solid #999; border-width: 1px 1px 0; }
.page-nav > button { width: 12px; height: 12px; margin-right: 1px; }
.page-nav > button svg { width: 10px; height: 12px; }
.count { width: 36px; text-align: center; white-space: nowrap; }
.page-nav .page-tab { position: relative; width: 38px; height: 14px; margin-left: 3px; }
.page-nav .page-tab svg { position: absolute; left: 0; top: -1px; width: 38px; height: 15px; }
.page-tab span { position: relative; }
.scroll-h { flex: 1; display: flex; background: #fff; }
.scroll-h button { width: 14px; background: #f3f3f3; }
.scroll-h .thumb { flex: 1; background: #cdcdcd; }
.doc-palette { flex: 0 0 13px; display: flex; align-items: flex-start; border-top: 1px solid #ddd; overflow: hidden; }
.grip { width: 7px; height: 13px; background: repeating-conic-gradient(#ccc 0 25%, #f4f4f4 0 50%) 0 0 / 2px 2px; }
.doc-palette .ico { width: 13px; height: 14px; }
.doc-palette .eyedrop { width: 18px; }
.doc-palette .none { width: 16px; }
.doc-palette p { flex: 1; text-align: center; font-size: 11px; font-style: italic; line-height: 16px; color: #aaa; white-space: nowrap; }
.doc-palette .next { width: 30px; }

/* Docker */
.side { flex: 0 0 229px; min-width: 0; display: flex; flex-direction: column; border-left: 4px solid #fafafa; background: #e7e7e7; }
.docker-title { flex: 0 0 17px; display: flex; align-items: center; gap: 2px; padding: 0 2px 0 1px; }
.docker-title h2 { flex: 1; font-weight: 400; }
.docker-title button, .docker-title svg { width: 12px; height: 12px; }
.side-body { flex: 1; min-height: 0; display: flex; }
.docker { flex: 1; min-width: 0; background: #f4f4f5; border-right: 2px solid #6ebfe6; overflow: hidden; }
.kinds { display: flex; gap: 2px; height: 22px; padding: 1px 0; background: #e7e7e7; border-top: 1px solid #ddd; }
.kinds button { width: 20px; height: 20px; }
.kinds .on { width: 18px; }
.kinds svg { width: 16px; height: 16px; }
.kinds .frame-button { margin-left: auto; margin-right: 3px; }
.panel { display: flex; flex-direction: column; gap: 3px; padding: 0 4px 4px 1px; }
.row { display: flex; align-items: center; height: 20px; }
.lead { width: 17px; height: 18px; }
.combo.field { width: 103px; margin-right: 3px; }
.select { position: relative; width: 71px; height: 20px; }
.select select { width: 100%; height: 100%; appearance: none; padding-left: 3px; background: #e9e9e9; border: 1px solid #bbb; }
.select svg { position: absolute; right: 3px; top: 7px; }
.flag { flex: none; width: 6px; height: 6px; margin-left: auto; background: #fff; border: 1px solid #ddd; }
.flag.near { margin: 0 5px; }
.combo .sample { flex: 1; height: 18px; justify-content: flex-start; }
.ink { flex: 1; height: 14px; margin: 2px; background: #231815; }
.stroke { flex: 1; height: 1px; background: #222; }
.dash { width: 9px; height: 2px; background: #222; }
.dash.right { margin-left: auto; }
.row .more { margin-left: 1px; }
.row .more svg { width: 16px; height: 6px; }
hr { width: 100%; height: 1px; margin: 1px 0; border: 0; background: #ddd; }
.stepper { display: flex; width: 91px; height: 20px; background: #fff; border: 1px solid #bbb; }
.stepper input { flex: 1; width: 20px; padding-left: 3px; font-size: 9px; }
.stepper > div { width: 14px; display: flex; flex-direction: column; background: #eee; border-left: 1px solid #ccc; }
.stepper button { flex: 1; }
.stepper svg { width: 6px; height: 5px; }
.trio { display: flex; gap: 6px; margin-left: -2px; }
.trio button { width: 20px; height: 20px; }
.trio .on { border-color: #ccc; }
.trio svg { width: 18px; height: 18px; }
.trio.pushed { margin-left: 122px; }
.panel.shaded { padding-top: 5px; background: #e9e9e9; }
.fold { width: 100%; height: 8px; margin-bottom: -1px; }
.fold svg { width: 8px; height: 6px; }
.row.check { height: 12px; }
.row.check label { display: flex; align-items: center; }
.row.indent label { margin-left: 16px; }
.row input[type="checkbox"] { appearance: none; width: 11px; height: 11px; margin-right: 2px; background: #fff; border: 1px solid #ccc; }
.nib { display: flex; align-items: flex-start; }
.nib-fields { display: flex; flex-direction: column; gap: 3px; width: 129px; }
.nib .row .near { margin-right: 0; }
.reset { width: 16px; height: 16px; margin: 2px 0 0 102px; }
.reset svg { width: 16px; height: 16px; }
.preview { width: 63px; height: 66px; padding: 9px; background: #fff; border: 1px solid #ccc; }
.preview span { display: block; height: 100%; background: #231815; }
.nib > .flag { margin-top: 7px; }

.docker-tabs { flex: 0 0 16px; display: flex; flex-direction: column; }
.docker-tabs button { writing-mode: vertical-rl; text-orientation: sideways; width: 16px; height: 81px; gap: 3px; justify-content: flex-start; padding-top: 4px; background: #d5d5d5; border-bottom: 1px solid #e7e7e7; }
.docker-tabs .current { background: #cce0ff; }
.docker-tabs .hints { height: 71px; }
.docker-tabs .manager, .docker-tabs .viewer { height: 92px; }
.docker-tabs svg { width: 14px; height: 14px; }
.docker-tabs .add { height: 32px; padding-top: 14px; background: none; border: 0; }

.palette { flex: 0 0 8px; min-width: 0; display: flex; flex-direction: column; background: #f4f4f4; border-left: 1px solid #ccc; overflow: hidden; }
.palette-head { width: 8px; height: 54px; }
.palette-foot { width: 8px; height: 30px; }
.swatches { flex: 1; min-height: 0; display: flex; flex-direction: column; }
.swatches > * { flex: 1 1 0; min-height: 0; width: 8px; }
.swatch { border-bottom: 1px solid #5558; }

/* Video brand */
.watermark { position: absolute; left: 39px; top: 36px; display: flex; color: #fff; font-size: 34px; line-height: 48px; font-weight: 600; font-style: italic; white-space: nowrap; -webkit-text-stroke: 8px #303030; paint-order: stroke fill; stroke-linejoin: round; pointer-events: none; }
.play { position: relative; }
.play svg { position: absolute; left: -1px; top: 7px; width: 24px; height: 32px; }
```

FILE: script.js
```js
const NS = "http://www.w3.org/2000/svg";

function buildRuler(svg, origin, step, first, last, vertical) {
  let ticks = "";
  for (let i = first * 10; i <= last * 10; i++) {
    const at = Math.round(origin + (i * step) / 10) + 0.5;
    const length = i % 10 === 0 ? 4 : i % 5 === 0 ? 3 : 2;
    ticks += vertical ? `M11 ${at}h-${length}` : `M${at} 12v-${length}`;
    if (i % 10 === 0) {
      const label = document.createElementNS(NS, "text");
      const pos = Math.floor(at);
      label.textContent = Math.abs(i * 5);
      label.setAttribute("x", vertical ? 0 : pos);
      label.setAttribute("y", vertical ? 0 : 8);
      if (vertical) label.setAttribute("transform", `translate(8 ${pos}) rotate(-90)`);
      svg.append(label);
    }
  }
  const path = document.createElementNS(NS, "path");
  path.setAttribute("d", ticks);
  svg.append(path);
}

buildRuler(document.getElementById("rulerH"), 350, 68.43, -5, 9, false);
buildRuler(document.getElementById("rulerV"), 480, -72, -1, 6, true);

const unit = document.createElementNS(NS, "text");
unit.textContent = "毫米";
unit.setAttribute("x", 990);
unit.setAttribute("y", 8);
document.getElementById("rulerH").append(unit);

const colours = ["#231815", "#474241", "#5f5d5d", "#737272", "#888", "#a0a0a0", "#b5b5b5", "#cacaca", "#dcdcdc", "#efefef", "#fff", "#1d2088", "#0a98f0", "#008c46", "#ffe600", "#f01a1a", "#ff1a8c", "#b84c8c", "#ff8c00", "#ffb3b3", "#8c7060", "#d0d0f0", "#a09ad0", "#6c8ad0", "#7060b8", "#8c78b0", "#48629c", "#544a78", "#6c7c9c", "#0084d8", "#98d4ff", "#b0ccdc", "#8ca0b0", "#607080"];
const swatches = document.getElementById("swatches");
for (const colour of colours) {
  const el = document.createElement("div");
  el.className = "swatch";
  el.style.background = colour;
  swatches.append(el);
}
```
